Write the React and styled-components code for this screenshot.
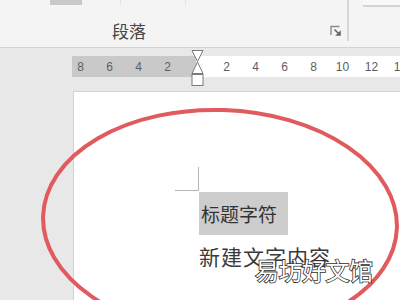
import React from "react";
import styled, { createGlobalStyle } from "styled-components";

const GlobalStyle = createGlobalStyle`
  html, body {
    margin: 0;
    padding: 0;
    background: #e8e8e8;
  }
  #root {
    width: 400px;
    height: 300px;
    overflow: hidden;
  }
`;

const Screen = styled.div`
  position: relative;
  width: 400px;
  height: 300px;
  display: flex;
  flex-direction: column;
  background: #e8e8e8;
  font-family: "Noto Sans CJK SC", "Liberation Sans", sans-serif;
  overflow: hidden;
`;

/* ribbon */

const Ribbon = styled.div`
  height: 47px;
  flex-shrink: 0;
  display: flex;
  background: #f4f4f4;
  border-bottom: 1px solid #d2d2d2;
`;

const Group = styled.div`
  width: ${(p) => p.width}px;
  display: flex;
  flex-direction: column;
  justify-content: space-between;
  border-right: ${(p) => (p.divider ? "2px solid #d6d6d6" : "none")};
  margin-bottom: 6px;
`;

const ControlRow = styled.div`
  display: flex;
  align-items: flex-start;
  height: 6px;
`;

const CutButton = styled.div`
  width: ${(p) => p.width}px;
  height: ${(p) => p.height}px;
  margin-left: ${(p) => p.offset}px;
  background: ${(p) => p.bg};
  border-bottom: ${(p) => (p.edge ? "2px solid #d4d4d4" : "none")};
`;

const Tick = styled.div`
  width: 1px;
  height: 5px;
  margin-left: ${(p) => p.offset}px;
  background: #e2e2e2;
`;

const LabelRow = styled.div`
  display: flex;
  align-items: center;
  justify-content: space-between;
  padding-left: 112px;
  padding-right: 5px;
`;

const GroupLabel = styled.span`
  font-size: 17px;
  line-height: 20px;
  color: #454545;
`;

const Launcher = () => (
  <svg width="12" height="12" viewBox="0 0 12 12">
    <path d="M1 10V1.5h8.5" fill="none" stroke="#8a8a8a" strokeWidth="1.4" />
    <path d="M4.5 4.5l5.5 5.5" stroke="#666" strokeWidth="1.6" />
    <path d="M10.8 5.2v5.6H5.2z" fill="#666" />
  </svg>
);

/* ruler */

const RulerArea = styled.div`
  position: relative;
  height: 43px;
  flex-shrink: 0;
  padding-top: 8px;
  box-sizing: border-box;
  display: flex;
  align-items: flex-start;
  padding-left: 72px;
`;

const RulerPart = styled.div`
  height: 21px;
  display: flex;
  align-items: center;
  justify-content: ${(p) => (p.margin ? "flex-end" : "flex-start")};
  width: ${(p) => p.width}px;
  flex: ${(p) => (p.margin ? "none" : "1")};
  background: ${(p) => (p.margin ? "#c9c9c9" : "#ffffff")};
  padding: ${(p) => (p.margin ? "0 14px 0 0" : "0 0 0 16px")};
  box-sizing: border-box;
  overflow: hidden;
`;

const RulerNum = styled.span`
  width: 29px;
  flex-shrink: 0;
  text-align: center;
  font-family: "Liberation Sans", Arial, sans-serif;
  font-size: 12px;
  color: #5e5e5e;
`;

const IndentMarker = styled.svg`
  position: absolute;
  left: 191px;
  top: 2px;
`;

/* page */

const Page = styled.div`
  flex: 1;
  margin-left: 73px;
  background: #ffffff;
  border-top: 1px solid #d4d4d4;
  border-left: 1px solid #d4d4d4;
  padding: 100px 0 0 125px;
`;

const TextBlock = styled.div`
  position: relative;
  display: flex;
  flex-direction: column;
  align-items: flex-start;

  &::before {
    content: "";
    position: absolute;
    left: -24px;
    top: -25px;
    width: 23px;
    height: 23px;
    border-right: 1px solid #b5b5b5;
    border-bottom: 1px solid #b5b5b5;
  }
`;

const Heading = styled.div`
  width: 89px;
  height: 43px;
  box-sizing: border-box;
  padding-left: 2px;
  display: flex;
  align-items: center;
  background: #cdcdcd;
  font-size: 19px;
  color: #333;
`;

const Body = styled.div`
  font-size: 21px;
  line-height: 42px;
  color: #3a3a3a;
  letter-spacing: 1px;
`;

const Watermark = styled.div`
  position: absolute;
  left: 255px;
  top: 252px;
  font-size: 24px;
  letter-spacing: -0.5px;
  color: #ffffff;
  -webkit-text-stroke: 1.6px #2e2e2e;
  paint-order: stroke fill;
`;

const Annotation = styled.svg`
  position: absolute;
  left: 0;
  top: 0;
  pointer-events: none;
`;

export default function App() {
  const left = ["8", "6", "4", "2"];
  const right = ["2", "4", "6", "8", "10", "12", "14"];

  return (
    <>
      <GlobalStyle />
      <Screen>
        <Ribbon>
          <Group width={349} divider>
            <ControlRow>
              <CutButton offset={50} width={32} height={5} bg="#c9c9c9" />
              <Tick offset={38} />
              <Tick offset={64} />
            </ControlRow>
            <LabelRow>
              <GroupLabel>段落</GroupLabel>
              <Launcher />
            </LabelRow>
          </Group>
          <Group width={51}>
            <ControlRow>
              <CutButton offset={14} width={37} height={5} bg="#f8f8f8" edge />
            </ControlRow>
          </Group>
        </Ribbon>

        <RulerArea>
          <RulerPart margin width={124}>
            {left.map((n, i) => (
              <RulerNum key={"l" + i}>{n}</RulerNum>
            ))}
          </RulerPart>
          <RulerPart>
            {right.map((n, i) => (
              <RulerNum key={"r" + i}>{n}</RulerNum>
            ))}
          </RulerPart>
          <IndentMarker width="13" height="37" viewBox="0 0 13 37">
            <path d="M1 0.5h11L6.5 11.5z" fill="#fff" stroke="#7a7a7a" />
            <path d="M6.5 12L12 23.5H1z" fill="#fff" stroke="#7a7a7a" />
            <rect x="1" y="24.5" width="11" height="11" fill="#fff" stroke="#7a7a7a" />
          </IndentMarker>
        </RulerArea>

        <Page>
          <TextBlock>
            <Heading>标题字符</Heading>
            <Body>新建文字内容</Body>
          </TextBlock>
        </Page>

        <Annotation width="400" height="300" viewBox="0 0 400 300">
          <ellipse
            cx="220"
            cy="222"
            rx="177"
            ry="112"
            transform="rotate(2 220 222)"
            fill="none"
            stroke="#e05a5e"
            strokeWidth="4"
          />
        </Annotation>

        <Watermark>易坊好文馆</Watermark>
      </Screen>
    </>
  );
}
